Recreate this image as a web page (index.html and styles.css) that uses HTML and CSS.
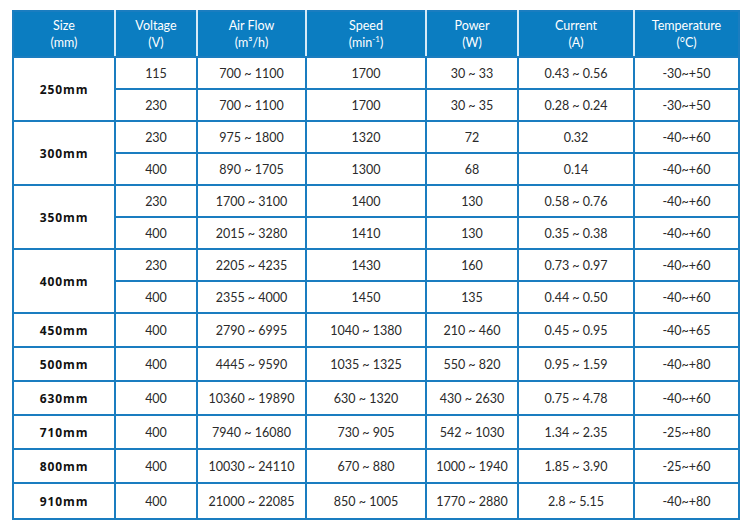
FILE: index.html
```html
<!DOCTYPE html>
<html>
<head>
<meta charset="utf-8">
<link rel="stylesheet" href="styles.css">
</head>
<body>
<table class="spec">
  <colgroup>
    <col class="c1"><col class="c2"><col class="c3"><col class="c4"><col class="c5"><col class="c6"><col class="c7">
  </colgroup>
  <thead>
    <tr>
      <th>Size<br>(mm)</th>
      <th>Voltage<br>(V)</th>
      <th>Air Flow<br>(m³/h)</th>
      <th>Speed<br>(min<sup>-1</sup>)</th>
      <th>Power<br>(W)</th>
      <th>Current<br>(A)</th>
      <th>Temperature<br>(°C)</th>
    </tr>
  </thead>
  <tbody>
    <tr class="sub"><td class="size" rowspan="2">250mm</td><td>115</td><td>700 ~ 1100</td><td>1700</td><td>30 ~ 33</td><td>0.43 ~ 0.56</td><td>-30~+50</td></tr>
    <tr class="sub"><td>230</td><td>700 ~ 1100</td><td>1700</td><td>30 ~ 35</td><td>0.28 ~ 0.24</td><td>-30~+50</td></tr>
    <tr class="sub"><td class="size" rowspan="2">300mm</td><td>230</td><td>975 ~ 1800</td><td>1320</td><td>72</td><td>0.32</td><td>-40~+60</td></tr>
    <tr class="sub"><td>400</td><td>890 ~ 1705</td><td>1300</td><td>68</td><td>0.14</td><td>-40~+60</td></tr>
    <tr class="sub"><td class="size" rowspan="2">350mm</td><td>230</td><td>1700 ~ 3100</td><td>1400</td><td>130</td><td>0.58 ~ 0.76</td><td>-40~+60</td></tr>
    <tr class="sub"><td>400</td><td>2015 ~ 3280</td><td>1410</td><td>130</td><td>0.35 ~ 0.38</td><td>-40~+60</td></tr>
    <tr class="sub"><td class="size" rowspan="2">400mm</td><td>230</td><td>2205 ~ 4235</td><td>1430</td><td>160</td><td>0.73 ~ 0.97</td><td>-40~+60</td></tr>
    <tr class="sub"><td>400</td><td>2355 ~ 4000</td><td>1450</td><td>135</td><td>0.44 ~ 0.50</td><td>-40~+60</td></tr>
    <tr class="single"><td class="size">450mm</td><td>400</td><td>2790 ~ 6995</td><td>1040 ~ 1380</td><td>210 ~ 460</td><td>0.45 ~ 0.95</td><td>-40~+65</td></tr>
    <tr class="single"><td class="size">500mm</td><td>400</td><td>4445 ~ 9590</td><td>1035 ~ 1325</td><td>550 ~ 820</td><td>0.95 ~ 1.59</td><td>-40~+80</td></tr>
    <tr class="single"><td class="size">630mm</td><td>400</td><td>10360 ~ 19890</td><td>630 ~ 1320</td><td>430 ~ 2630</td><td>0.75 ~ 4.78</td><td>-40~+60</td></tr>
    <tr class="single"><td class="size">710mm</td><td>400</td><td>7940 ~ 16080</td><td>730 ~ 905</td><td>542 ~ 1030</td><td>1.34 ~ 2.35</td><td>-25~+80</td></tr>
    <tr class="single"><td class="size">800mm</td><td>400</td><td>10030 ~ 24110</td><td>670 ~ 880</td><td>1000 ~ 1940</td><td>1.85 ~ 3.90</td><td>-25~+60</td></tr>
    <tr class="single last"><td class="size">910mm</td><td>400</td><td>21000 ~ 22085</td><td>850 ~ 1005</td><td>1770 ~ 2880</td><td>2.8 ~ 5.15</td><td>-40~+80</td></tr>
  </tbody>
</table>
</body>
</html>
```
FILE: styles.css
```css
html, body {
  margin: 0;
  padding: 0;
  background: #ffffff;
}
body {
  padding: 10px 0 0 12px;
  font-family: Lato, "Open Sans", sans-serif;
}
.spec {
  border-collapse: collapse;
  table-layout: fixed;
  width: 726px;
  border: 2px solid #1a7dc0;
}
.c1 { width: 102px; }
.c2 { width: 82px; }
.c3 { width: 109px; }
.c4 { width: 120px; }
.c5 { width: 92px; }
.c6 { width: 116px; }
.c7 { width: 105px; }
.spec th {
  background: #0b7dc1;
  color: #ffffff;
  font-weight: 400;
  font-size: 12.5px;
  line-height: 17px;
  height: 44px;
  padding: 0;
  border: 2px solid #1a7dc0;
  border-left-color: #d6eaf7;
  border-right-color: #d6eaf7;
  text-align: center;
  vertical-align: middle;
}
.spec th:first-child { border-left-color: #1a7dc0; }
.spec th:last-child { border-right-color: #1a7dc0; }
.spec th sup {
  font-size: 8px;
  line-height: 0;
  vertical-align: 5px;
}
.spec td {
  border: 2px solid #1a7dc0;
  padding: 0;
  text-align: center;
  vertical-align: middle;
  color: #2a2a2a;
  font-size: 12.5px;
  font-weight: 400;
}
.sub td { height: 30px; }
.single td { height: 32px; }
.last td { height: 34px; }
.spec td.size {
  font-family: "Open Sans", sans-serif;
  font-weight: 700;
  font-size: 12px;
  letter-spacing: 0.9px;
  color: #111111;
}
```
